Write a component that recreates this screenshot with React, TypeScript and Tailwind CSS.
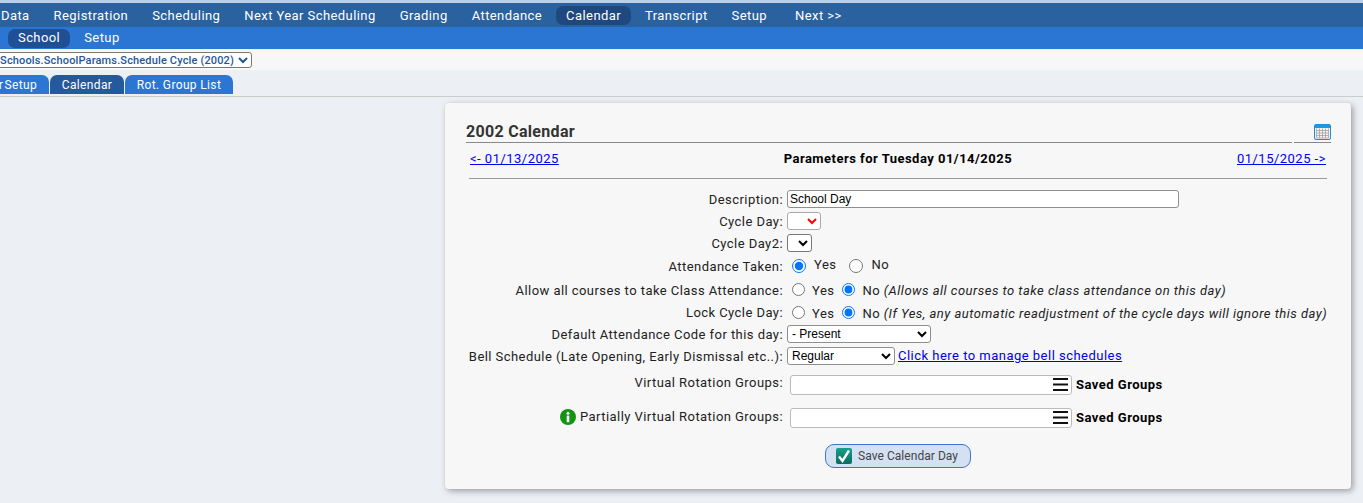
import { ReactNode } from "react";

const navItems = ["Registration", "Scheduling", "Next Year Scheduling", "Grading", "Attendance", "Calendar", "Transcript", "Setup"];

const Row = ({ label, height, children }: { label: ReactNode; height: string; children: ReactNode }) => (
    <div className={`flex items-center ${height}`}>
        <div className="w-[317px] shrink-0 text-right whitespace-nowrap flex justify-end items-center tracking-[0.44px]">{label}</div>
        <div className="ml-[4px] -mt-[2px] flex items-center whitespace-nowrap">{children}</div>
    </div>
);

const Radio = ({ checked, name }: { checked?: boolean; name: string }) => (
    <input type="radio" name={name} defaultChecked={checked} className="w-[13px] h-[13px] m-0" />
);

const GroupPicker = () => (
    <div className="flex items-center ml-[3px] mt-[2px]">
        <div className="w-[282px] h-[20px] bg-white border border-[#bbbbbb] rounded-[3px] flex items-center justify-end pr-[3px]">
            <svg viewBox="0 0 15 13" className="w-[15px] h-[13px]">
                <rect x="0" y="0" width="15" height="2" fill="#111111" />
                <rect x="0" y="5.5" width="15" height="2" fill="#111111" />
                <rect x="0" y="11" width="15" height="2" fill="#111111" />
            </svg>
        </div>
        <span className="ml-[4px] font-bold text-black">Saved Groups</span>
    </div>
);

const CalendarIcon = () => (
    <svg viewBox="0 0 17 16" className="w-[17px] h-[16px]">
        <rect x="0.5" y="0.5" width="16" height="15" rx="1.5" fill="#f2f2f2" stroke="#1f8ed8" />
        <rect x="1" y="1" width="15" height="3" fill="#1f9ae2" />
        <path d="M2.5 6.5h12M2.5 9h12M2.5 11.5h12M2.5 14h12M2.5 4.5v9.5M5.5 4.5v9.5M8.5 4.5v9.5M11.5 4.5v9.5M14.5 4.5v9.5" stroke="#a3a3a3" strokeWidth="0.8" fill="none" />
    </svg>
);

const InfoIcon = () => (
    <svg viewBox="0 0 16 16" className="w-[16px] h-[16px] mr-[4px]">
        <circle cx="8" cy="8" r="8" fill="#129412" />
        <circle cx="8" cy="4.2" r="1.5" fill="#ffffff" />
        <rect x="6.7" y="6.6" width="2.6" height="6.6" fill="#ffffff" />
    </svg>
);

export default function App() {
    return (
        <div className="w-[1363px] h-[503px] overflow-hidden bg-[#eceff4] text-[#222222] text-[13px] tracking-[0.48px] font-['Roboto',sans-serif]">
            <div className="h-[3px] bg-[#bdd0e6]" />

            {/* Top nav */}
            <div className="h-[24px] pt-px bg-[#2a619f] flex items-center text-white text-[13px] tracking-[0.42px] overflow-hidden">
                <span className="ml-[1px] mr-[12px]">Data</span>
                {navItems.map((item) => (
                    <span key={item} className={`px-[10px] mx-[2px] h-[19px] flex items-center rounded-[7px] ${item === "Calendar" ? "bg-[#1f487e]" : ""}`}>
                        {item}
                    </span>
                ))}
                <span className="ml-[16px]">{"Next >>"}</span>
            </div>

            {/* Sub nav */}
            <div className="h-[22px] bg-[#2b76d2] flex items-center text-white text-[13px] tracking-[0.42px]">
                <span className="ml-[8px] px-[10px] h-[19px] flex items-center rounded-[7px] bg-[#1f4f94]">School</span>
                <span className="ml-[4px] px-[10px]">Setup</span>
            </div>

            {/* Context selector */}
            <div className="h-[20px] mt-px bg-[#f7f7f7] flex items-center overflow-hidden">
                <select className="-ml-[43px] w-[295px] shrink-0 h-[16px] bg-white border border-[#777777] rounded-[3px] text-[11px] tracking-[0.15px] text-[#23579a] font-medium">
                    <option>People.Schools.SchoolParams.Schedule Cycle (2002)</option>
                </select>
            </div>

            {/* Tabs */}
            <div className="h-[27px] border-b border-[#cccccc] flex items-end overflow-hidden text-white text-[12px] tracking-[0.35px] pb-[2px]">
                <span className="h-[19px] w-[49px] bg-[#2b76d2] rounded-tr-[7px] flex items-center justify-end pr-[12px] whitespace-nowrap [word-spacing:-2px]">r Setup</span>
                <span className="ml-px h-[19px] w-[74px] bg-[#26599b] rounded-t-[7px] flex items-center justify-center">Calendar</span>
                <span className="ml-px h-[19px] w-[108px] bg-[#2b76d2] rounded-t-[7px] flex items-center justify-center whitespace-nowrap">Rot. Group List</span>
            </div>

            {/* Main card */}
            <div className="mt-[6px] ml-[445px] w-[906px] h-[386px] bg-[#f7f7f7] rounded-[4px] shadow-[2px_2px_6px_rgba(0,0,0,0.35)] pt-[18px] pl-[21px]">
                <div className="flex items-end h-[22px]">
                    <div className="w-[826px] h-[22px] border-b border-[#888888] font-bold text-[16px] tracking-[0.3px] text-[#333333] leading-[22px]">2002 Calendar</div>
                    <div className="ml-[2px] w-[37px] h-[19px] border-b border-[#888888] flex justify-end">
                        <CalendarIcon />
                    </div>
                </div>

                <div className="w-[858px] ml-[3px] h-[36px] border-b border-[#999999] flex items-center justify-between pb-[4px] px-px">
                    <a href="#" className="underline text-[#0000ee]">{"<- 01/13/2025"}</a>
                    <b className="text-black">Parameters for Tuesday 01/14/2025</b>
                    <a href="#" className="underline text-[#0000ee]">{"01/15/2025 ->"}</a>
                </div>

                <div className="mt-[10px]">
                    <Row label="Description:" height="h-[22px]">
                        <input defaultValue="School Day" className="w-[392px] h-[18px] bg-white border border-[#8f8f8f] rounded-[3px] px-[2px] text-[12px] tracking-normal text-black font-['Liberation_Sans',sans-serif]" />
                    </Row>
                    <Row label="Cycle Day:" height="h-[22px]">
                        <select className="w-[34px] h-[18px] bg-white border border-[#aaaaaa] rounded-[3px] text-[#ff0000]"><option></option></select>
                    </Row>
                    <Row label="Cycle Day2:" height="h-[22px]">
                        <select className="w-[25px] h-[18px] bg-white border border-[#777777] rounded-[3px] text-black"><option></option></select>
                    </Row>
                    <Row label="Attendance Taken:" height="h-[24px]">
                        <span className="ml-[5px] flex items-center">
                            <input type="radio" name="taken" defaultChecked className="w-[14px] h-[14px] m-0" />
                            <span className="ml-[8px] -mt-[2px]">Yes</span>
                            <span className="ml-[13px] flex"><input type="radio" name="taken" className="w-[14px] h-[14px] m-0" /></span>
                            <span className="ml-[8px] -mt-[2px]">No</span>
                        </span>
                    </Row>
                    <Row label="Allow all courses to take Class Attendance:" height="h-[23px]">
                        <span className="ml-[5px] flex items-center">
                            <Radio name="allow" />
                            <span className="ml-[7px] mt-[3px]">Yes</span>
                            <span className="ml-[8px] flex"><Radio name="allow" checked /></span>
                            <span className="ml-[7px] mt-[3px]">No <i>(Allows all courses to take class attendance on this day)</i></span>
                        </span>
                    </Row>
                    <Row label="Lock Cycle Day:" height="h-[22px]">
                        <span className="ml-[5px] flex items-center">
                            <Radio name="lock" />
                            <span className="ml-[7px] mt-[3px]">Yes</span>
                            <span className="ml-[8px] flex"><Radio name="lock" checked /></span>
                            <span className="ml-[7px] mt-[3px]">No <i>(If Yes, any automatic readjustment of the cycle days will ignore this day)</i></span>
                        </span>
                    </Row>
                    <Row label="Default Attendance Code for this day:" height="h-[22px]">
                        <select className="w-[144px] h-[18px] bg-white border border-[#8f8f8f] rounded-[3px] text-[12px] tracking-normal text-black font-['Liberation_Sans',sans-serif]"><option>- Present</option></select>
                    </Row>
                    <Row label="Bell Schedule (Late Opening, Early Dismissal etc..):" height="h-[22px]">
                        <select className="w-[108px] h-[18px] bg-white border border-[#8f8f8f] rounded-[3px] text-[12px] tracking-normal text-black font-['Liberation_Sans',sans-serif]"><option>Regular</option></select>
                        <a href="#" className="ml-[3px] underline text-[#0000ee]">Click here to manage bell schedules</a>
                    </Row>
                    <Row label={<span className="-mt-[3px]">Virtual Rotation Groups:</span>} height="h-[33px]">
                        <GroupPicker />
                    </Row>
                    <Row
                        label={
                            <span className="-mt-[2px] flex items-center">
                                <InfoIcon />
                                Partially Virtual Rotation Groups:
                            </span>
                        }
                        height="h-[33px]"
                    >
                        <GroupPicker />
                    </Row>
                </div>

                <div className="mt-[10px] ml-[359px]">
                    <button className="w-[146px] h-[24px] bg-[#d3e1f2] border border-[#3a78cc] rounded-[9px] flex items-center text-[12px] tracking-[0.05px] text-[#444444]">
                        <span className="ml-[10px] mr-[6px] w-[16px] h-[16px] rounded-[2px] bg-linear-to-b from-[#18a08e] to-[#0b6b60] flex items-center justify-center">
                            <svg viewBox="0 0 16 16" className="w-[16px] h-[16px]">
                                <path d="M3 8.5l3.5 4.5 6.5-10.5" fill="none" stroke="#ffffff" strokeWidth="2.4" />
                            </svg>
                        </span>
                        Save Calendar Day
                    </button>
                </div>
            </div>
        </div>
    );
}
